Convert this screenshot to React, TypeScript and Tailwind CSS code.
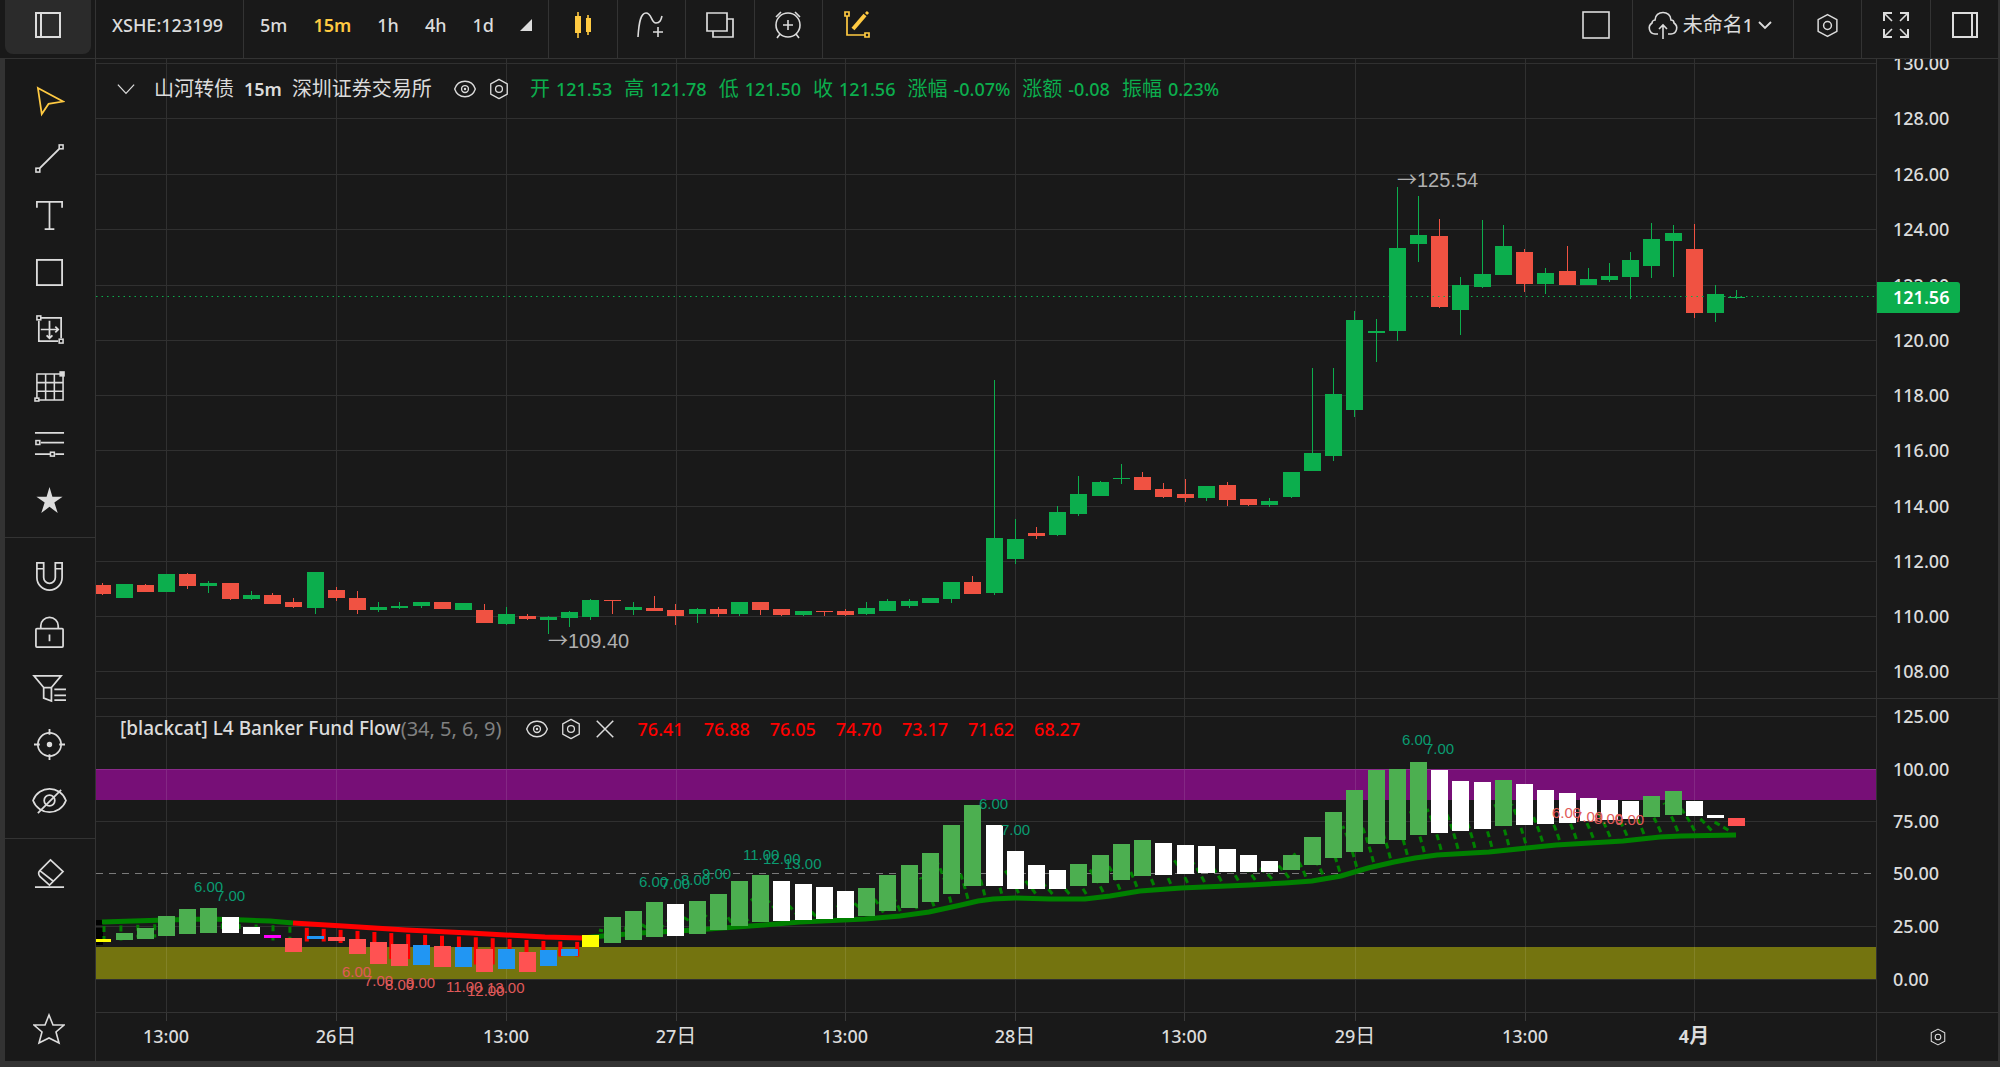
import React from "react";

// [index, body top, body bottom, high, low, direction], index 0 sits on the first 13:00 line
type Candle = [number, number, number, number, number, string];

const candles: Candle[] = [
  [-3, 585, 594, 583, 595, "d"],
  [-2, 584, 598, 584, 598, "u"],
  [-1, 585, 592, 584, 592, "d"],
  [0, 574, 592, 574, 592, "u"],
  [1, 574, 586, 573, 589, "d"],
  [2, 583, 586, 581, 593, "u"],
  [3, 583, 599, 583, 600, "d"],
  [4, 595, 599, 591, 600, "u"],
  [5, 595, 604, 593, 604, "d"],
  [6, 602, 607, 598, 608, "d"],
  [7, 572, 608, 572, 614, "u"],
  [8, 590, 598, 587, 601, "d"],
  [9, 598, 610, 591, 614, "d"],
  [10, 607, 610, 602, 612, "u"],
  [11, 606, 608, 602, 609, "u"],
  [12, 602, 606, 602, 608, "u"],
  [13, 602, 609, 602, 609, "d"],
  [14, 603, 610, 603, 610, "u"],
  [15, 610, 623, 604, 623, "d"],
  [16, 614, 624, 607, 625, "u"],
  [17, 616, 619, 614, 620, "d"],
  [18, 617, 620, 616, 634, "u"],
  [19, 612, 618, 611, 627, "u"],
  [20, 600, 617, 599, 620, "u"],
  [21, 600, 601, 600, 614, "d"],
  [22, 607, 610, 602, 615, "u"],
  [23, 608, 611, 596, 611, "d"],
  [24, 610, 616, 604, 625, "d"],
  [25, 609, 614, 608, 623, "u"],
  [26, 609, 614, 607, 617, "d"],
  [27, 602, 614, 602, 616, "u"],
  [28, 602, 610, 602, 615, "d"],
  [29, 609, 615, 609, 616, "d"],
  [30, 611, 615, 611, 616, "u"],
  [31, 611, 612, 611, 616, "d"],
  [32, 611, 615, 609, 616, "d"],
  [33, 608, 614, 602, 615, "u"],
  [34, 601, 611, 599, 611, "u"],
  [35, 601, 606, 599, 608, "u"],
  [36, 598, 603, 598, 603, "u"],
  [37, 582, 599, 582, 603, "u"],
  [38, 582, 594, 576, 594, "d"],
  [39, 538, 593, 380, 595, "u"],
  [40, 539, 559, 519, 564, "u"],
  [41, 533, 536, 527, 539, "d"],
  [42, 512, 535, 506, 536, "u"],
  [43, 494, 514, 476, 516, "u"],
  [44, 482, 496, 481, 496, "u"],
  [45, 478, 479, 464, 484, "u"],
  [46, 477, 490, 472, 490, "d"],
  [47, 489, 497, 483, 498, "d"],
  [48, 494, 498, 479, 502, "d"],
  [49, 486, 498, 486, 501, "u"],
  [50, 485, 500, 482, 506, "d"],
  [51, 499, 505, 499, 506, "d"],
  [52, 501, 505, 498, 507, "u"],
  [53, 472, 497, 472, 498, "u"],
  [54, 453, 471, 368, 471, "u"],
  [55, 394, 456, 368, 461, "u"],
  [56, 320, 410, 311, 417, "u"],
  [57, 331, 333, 319, 362, "u"],
  [58, 248, 331, 187, 341, "u"],
  [59, 235, 244, 196, 262, "u"],
  [60, 236, 307, 219, 308, "d"],
  [61, 285, 310, 277, 335, "u"],
  [62, 274, 287, 220, 288, "u"],
  [63, 246, 275, 225, 275, "u"],
  [64, 252, 284, 249, 292, "d"],
  [65, 273, 284, 268, 294, "u"],
  [66, 271, 285, 246, 285, "d"],
  [67, 279, 285, 268, 285, "u"],
  [68, 276, 280, 263, 282, "u"],
  [69, 260, 277, 252, 299, "u"],
  [70, 239, 266, 223, 278, "u"],
  [71, 233, 241, 225, 277, "u"],
  [72, 249, 313, 224, 318, "d"],
  [73, 294, 313, 285, 322, "u"],
  [74, 297, 298, 290, 299, "u"],
];

// [top, bottom, colour key], starting at index -3
const flow: [number, number, string][] = [
  [939, 942, "y"], [933, 940, "g"], [928, 939, "g"], [916, 936, "g"], [909, 934, "g"],
  [908, 933, "g"], [917, 933, "w"], [927, 934, "w"], [935, 938, "m"], [938, 952, "r"],
  [936, 939, "b"], [937, 941, "r"], [939, 954, "r"], [942, 964, "r"], [944, 966, "r"],
  [945, 965, "b"], [946, 967, "r"], [947, 967, "b"], [949, 972, "r"], [949, 969, "b"],
  [952, 972, "r"], [950, 966, "b"], [949, 956, "b"], [935, 947, "y"], [917, 943, "g"],
  [911, 940, "g"], [902, 937, "g"], [904, 936, "w"], [901, 934, "g"], [894, 930, "g"],
  [881, 926, "g"], [875, 922, "g"], [881, 921, "w"], [884, 920, "w"], [887, 919, "w"],
  [891, 918, "w"], [888, 916, "g"], [875, 911, "g"], [865, 908, "g"], [853, 902, "g"],
  [825, 894, "g"], [805, 886, "g"], [825, 886, "w"], [851, 889, "w"], [865, 889, "w"],
  [870, 889, "w"], [864, 886, "g"], [855, 883, "g"], [844, 880, "g"], [840, 876, "g"],
  [843, 875, "w"], [845, 874, "w"], [846, 873, "w"], [849, 872, "w"], [855, 872, "w"],
  [861, 872, "w"], [855, 870, "g"], [837, 865, "g"], [812, 858, "g"], [790, 852, "g"],
  [770, 844, "g"], [769, 840, "g"], [762, 835, "g"], [770, 833, "w"], [781, 831, "w"],
  [782, 829, "w"], [780, 826, "g"], [784, 825, "w"], [790, 824, "w"], [793, 823, "w"],
  [798, 821, "w"], [800, 820, "w"], [801, 819, "w"], [796, 817, "g"], [791, 815, "g"],
  [801, 816, "w"], [815, 818, "w"], [818, 826, "r"],
];

const flowColors: Record<string, string> = {
  y: "#ffff00",
  g: "#4caf50",
  w: "#ffffff",
  m: "#ff00ff",
  r: "#ff5252",
  b: "#2196f3",
};

const trend: [number, number][] = [
  [102, 922], [165, 920], [208, 919], [244, 920], [270, 921], [293, 923], [343, 926],
  [406, 930], [470, 933], [545, 937], [582, 938], [603, 936], [640, 933], [695, 930],
  [764, 925], [800, 922], [865, 919], [900, 916], [929, 912], [961, 905], [978, 901],
  [993, 899], [1015, 898], [1050, 899], [1085, 899], [1110, 896], [1140, 891], [1181, 888],
  [1250, 885], [1285, 883], [1312, 881], [1341, 876], [1368, 868], [1394, 862], [1415, 858],
  [1437, 855], [1489, 852], [1556, 845], [1623, 841], [1660, 837], [1681, 836], [1736, 835],
];

const marks: [number, number, string, string][] = [
  [194, 892, "6.00", "up"], [216, 901, "7.00", "up"],
  [342, 977, "6.00", "down"], [364, 986, "7.00", "down"], [385, 990, "8.00", "down"],
  [406, 988, "9.00", "down"], [446, 992, "11.00", "down"], [467, 996, "12.00", "down"],
  [487, 993, "13.00", "down"],
  [639, 887, "6.00", "up"], [661, 889, "7.00", "up"], [681, 885, "8.00", "up"],
  [702, 879, "9.00", "up"], [743, 860, "11.00", "up"], [763, 864, "12.00", "up"],
  [784, 869, "13.00", "up"],
  [979, 809, "6.00", "up"], [1001, 835, "7.00", "up"],
  [1402, 745, "6.00", "up"], [1425, 754, "7.00", "up"],
  [1552, 818, "6.00", "down"], [1574, 822, "7.00", "down"], [1594, 824, "8.00", "down"],
  [1615, 825, "9.00", "down"],
];

const vLines = [166, 336, 506, 676, 845, 1015, 1184, 1355, 1525, 1694];
const priceLines = [63, 118, 174, 229, 285, 340, 395, 450, 506, 561, 616, 671];
const prices = ["130.00", "128.00", "126.00", "124.00", "122.00", "120.00", "118.00", "116.00", "114.00", "112.00", "110.00", "108.00"];
const flowLines = [716, 769, 821, 873, 926, 979];
const flowTicks = ["125.00", "100.00", "75.00", "50.00", "25.00", "0.00"];
const times = ["13:00", "26日", "13:00", "27日", "13:00", "28日", "13:00", "29日", "13:00", "4月"];

const barX = (i: number) => Math.round(166 + i * 21.22);

const trendY = (x: number) => {
  for (let i = 1; i < trend.length; i++) {
    const [x1, y1] = trend[i - 1];
    const [x2, y2] = trend[i];
    if (x <= x2) return y1 + ((y2 - y1) * (x - x1)) / (x2 - x1);
  }
  return 835;
};

const points = (from: number, to: number) =>
  trend
    .filter(([x]) => x >= from && x <= to)
    .map((p) => p.join(","))
    .join(" ");

const Icon = ({ children, className = "size-8" }: { children: React.ReactNode; className?: string }) => (
  <svg viewBox="0 0 32 32" className={className} fill="none" stroke="currentColor" strokeWidth="1.6" aria-hidden="true">
    {children}
  </svg>
);

const HexIcon = ({ className }: { className?: string }) => (
  <Icon className={className}>
    <path d="M16 2 28 8.500V23.500L16 30 4 23.500V8.500Z" strokeLinejoin="round" strokeWidth="1.9" />
    <circle cx="16" cy="16" r="5" strokeWidth="1.9" />
  </Icon>
);

const EyeIcon = ({ className }: { className?: string }) => (
  <Icon className={className}>
    <path d="M1 16C6 1 26 1 31 16C26 31 6 31 1 16Z" strokeWidth="2" />
    <circle cx="16" cy="16" r="5" strokeWidth="2" />
    <circle cx="16" cy="16" r="1" />
  </Icon>
);

const drawTools = [
  {
    label: "Cursor",
    icon: <path d="M4 2 30 16 15 18.5 8 29Z" strokeWidth="1.8" />,
  },
  {
    label: "Trend line",
    icon: (
      <>
        <path d="M6 26 26 6" strokeWidth="2" />
        <rect x="2" y="26" width="4" height="4" />
        <rect x="26" y="2" width="4" height="4" />
      </>
    ),
  },
  { label: "Text", icon: <path d="M3 8V2H29V8M16 2V30M11 30H21" strokeWidth="1.8" /> },
  { label: "Rectangle", icon: <rect x="3" y="3" width="26" height="26" strokeWidth="1.9" /> },
  {
    label: "Measure",
    icon: (
      <>
        <path d="M7 4H28V25M25 28H5V7M16 7V25M7 16H25M13 22l3 3 3-3M22 13l3 3-3 3" strokeWidth="1.8" />
        <rect x="3" y="2" width="4" height="4" />
        <rect x="26" y="26" width="4" height="4" />
      </>
    ),
  },
  {
    label: "Grid",
    icon: (
      <>
        <path d="M3 3H30V30H3ZM3 12H30M3 21H30M12 3V30M21 3V30" />
        <rect x="27" y="1" width="4" height="4" fill="currentColor" />
        <rect x="1" y="28" width="4" height="3" fill="#191919" />
      </>
    ),
  },
  {
    label: "Levels",
    icon: (
      <>
        <path d="M1 5H31M7 15H31M1 27H17M22 27H31" strokeWidth="1.8" />
        <rect x="2" y="13" width="4" height="4" />
        <rect x="17" y="25" width="4" height="4" />
      </>
    ),
  },
  {
    label: "Favourite",
    icon: <path d="M16 2 19 12H29.500L21 18 24.500 29 16 22.500 7.500 29 11 18 2.500 12H13Z" fill="currentColor" stroke="none" />,
  },
];

const lockTools = [
  {
    label: "Magnet",
    icon: <path d="M3 2H10V17A6 6 0 0 0 22 17V2H29V17A13 13 0 0 1 3 17ZM3 8H10M22 8H29" strokeWidth="1.8" />,
  },
  {
    label: "Lock",
    icon: (
      <>
        <rect x="2" y="12" width="28" height="19" rx="1" strokeWidth="1.8" />
        <path d="M7 12V9A9 8.500 0 0 1 25 9V12M16 18V25" strokeWidth="1.8" />
      </>
    ),
  },
  {
    label: "Filter",
    icon: <path d="M0 3H28L18 15V29L10 26V15ZM10 15H18M21 17H33M21 23H33M21 28H33" strokeWidth="1.8" />,
  },
  {
    label: "Target",
    icon: (
      <>
        <circle cx="16" cy="16" r="12" strokeWidth="1.8" />
        <path d="M16 0V6M16 26V32M0 16H6M26 16H32" strokeWidth="1.9" />
        <circle cx="16" cy="16" r="2" fill="currentColor" />
      </>
    ),
  },
  {
    label: "Hide",
    icon: (
      <>
        <path d="M-1 16C5 0 27 0 33 16C27 32 5 32 -1 16Z" strokeWidth="1.8" />
        <circle cx="16" cy="16" r="5.500" strokeWidth="1.8" />
        <path d="M4 29 28 5" strokeWidth="1.9" />
      </>
    ),
  },
];

const ohlc = [
  ["开", "121.53"],
  ["高", "121.78"],
  ["低", "121.50"],
  ["收", "121.56"],
  ["涨幅", "-0.07%"],
  ["涨额", "-0.08"],
  ["振幅", "0.23%"],
];

const Header = () => (
  <header className="flex h-[59px] shrink-0 border-b border-[#333] pl-[5px] text-lg font-medium">
    <div className="w-[91px] shrink-0 border-r border-[#333] pb-1 pr-1">
      <button aria-label="Toggle left panel" className="flex h-full w-full items-center justify-center rounded-b-lg bg-[#2b2b2b] pb-1">
        <Icon>
          <path d="M4 4H28V28H4ZM9 4V28" strokeWidth="2" />
        </Icon>
      </button>
    </div>
    <button className="border-r border-[#333] pb-2 pl-4 pr-5">XSHE:123199</button>
    <nav className="flex items-center gap-6.5 border-r border-[#333] px-4 pb-2">
      <button>5m</button>
      <button className="font-semibold text-[#ffca42]">15m</button>
      <button>1h</button>
      <button>4h</button>
      <button>1d</button>
      <button aria-label="More intervals">
        <svg viewBox="0 0 12 12" className="size-3 fill-current">
          <path d="M12 0V12H0Z" />
        </svg>
      </button>
    </nav>
    <button aria-label="Chart type" className="w-[69px] border-r border-[#333] pb-2 text-[#ffca42]">
      <Icon className="mx-auto size-8">
        <path d="M11 3V29M21 6V26" />
        <path d="M8 7H14V24H8ZM19 9H24V23H19Z" fill="currentColor" stroke="none" />
      </Icon>
    </button>
    <button aria-label="Indicators" className="w-[68px] border-r border-[#333] pb-2">
      <Icon className="mx-auto size-8">
        <path d="M3 28C4 12 6 4 11 4C17 4 16 14 21 14C25 14 26 11 27 7M23 18V28M18 23H28" />
      </Icon>
    </button>
    <button aria-label="Layers" className="w-[69px] border-r border-[#333] pb-2">
      <Icon className="mx-auto size-8">
        <path d="M3 4H23V22H3ZM23 10H29V28H9V22" strokeWidth="1.7" />
      </Icon>
    </button>
    <button aria-label="Alerts" className="w-[68px] border-r border-[#333] pb-2">
      <Icon className="mx-auto size-8">
        <circle cx="16" cy="16" r="12" />
        <path d="M16 11V21M11 16H21M4 8 9 3M28 8 23 3M8 25 5 29M24 25 27 29" />
      </Icon>
    </button>
    <button aria-label="Drawing" className="w-[68px] pb-2 text-[#ffca42]">
      <Icon className="mx-auto size-8">
        <path d="M6 7V26H24M4 3H8V7H4ZM24 24H28V28H24Z" strokeWidth="1.7" />
        <path d="M12 20 24 6" strokeWidth="4" />
        <path d="M25 5 27 3" strokeWidth="3" />
      </Icon>
    </button>
    <div className="ml-auto flex">
      <button aria-label="Layout" className="px-5 pb-2 pt-1">
        <Icon className="size-8">
          <rect x="3" y="1" width="26" height="26" />
        </Icon>
      </button>
      <button className="flex items-center gap-1 border-x border-[#333] pb-2 pl-3.5 pr-5 text-xl font-normal">
        <Icon className="size-8">
          <path d="M11 25H8A6 6 0 0 1 5 14C5 12 7 11 8 11C8 1 24 1 24 11C26 11 27 12 27 14A6 6 0 0 1 24 25H21M16 30V16M12 20 16 16 20 20" />
        </Icon>
        <span>
          未命名<span className="text-lg font-medium">1</span>
        </span>
        <svg viewBox="0 0 16 16" className="size-4" fill="none" stroke="currentColor" strokeWidth="1.8">
          <path d="M2 5 8 11 14 5" />
        </svg>
      </button>
      <button aria-label="Settings" className="w-[68px] border-r border-[#333] pb-2">
        <HexIcon className="mx-auto size-[25px]" />
      </button>
      <button aria-label="Fullscreen" className="w-[69px] border-r border-[#333] pb-2">
        <Icon className="mx-auto size-8">
          <path d="M4 12V4H12M20 4H28V12M28 20V28H20M12 28H4V20" strokeWidth="2" />
          <path d="M4 4 12 12M28 4 20 12M28 28 20 20M4 28 12 20" />
        </Icon>
      </button>
      <button aria-label="Toggle right panel" className="w-[69px] border-r-2 border-[#333] pb-2">
        <Icon className="mx-auto size-8">
          <path d="M4 4H28V28H4ZM23 4V28" strokeWidth="2" />
        </Icon>
      </button>
    </div>
  </header>
);

const Sidebar = () => (
  <aside className="flex w-[91px] shrink-0 flex-col border-r border-[#333]">
    <div className="flex flex-col border-b border-[#333] pb-2 pr-0.5 pt-3.5">
      {drawTools.map((t, i) => (
        <button
          key={t.label}
          aria-label={t.label}
          className={i === 0 ? "flex h-[57px] items-center justify-center text-[#ffca42]" : "flex h-[57px] items-center justify-center"}
        >
          <Icon className="size-[31px]">{t.icon}</Icon>
        </button>
      ))}
    </div>
    <div className="flex flex-col border-b border-[#333] pb-2.5 pr-0.5 pt-2.5">
      {lockTools.map((t) => (
        <button key={t.label} aria-label={t.label} className="flex h-14 items-center justify-center">
          <Icon className="size-[31px] overflow-visible">{t.icon}</Icon>
        </button>
      ))}
    </div>
    <button aria-label="Erase" className="mt-1.5 flex h-14 items-center justify-center pr-0.5">
      <Icon className="size-[31px]">
        <path d="M17 2 30 14 16 28 6 19C4 16 5 14 6 13ZM6 13 20 24M1 30H31" strokeWidth="1.7" />
      </Icon>
    </button>
    <button aria-label="Starred" className="mb-1 mt-auto flex h-14 items-center justify-center pr-0.5">
      <Icon className="size-8">
        <path d="M16 2 20 12H31L23 19 26 30 16 25 6 30 9 19 1 12H12Z" />
      </Icon>
    </button>
  </aside>
);

const Grid = ({ rows, top, bottom }: { rows: number[]; top: number; bottom: number }) => (
  <g stroke="#303030" shapeRendering="crispEdges">
    {rows.map((y) => (
      <line key={y} x1="96" x2="1876" y1={y + 0.5} y2={y + 0.5} />
    ))}
    {vLines.map((x) => (
      <line key={x} x1={x + 0.5} x2={x + 0.5} y1={top} y2={bottom} />
    ))}
  </g>
);

const Extreme = ({ x, y, value }: { x: number; y: number; value: string }) => (
  <text x={x} y={y} className="fill-[#b0b0b0] font-['Liberation_Sans',sans-serif] text-xl">
    <tspan className="font-['Noto_Sans_CJK_SC',sans-serif]">→</tspan>
    {value}
  </text>
);

const PriceChart = () => (
  <svg viewBox="96 59 1780 639" preserveAspectRatio="none" className="absolute inset-0 h-full w-full" role="img" aria-label="Price chart">
    <Grid rows={priceLines} top={59} bottom={698} />
    <g shapeRendering="crispEdges">
      {candles.map(([i, top, bottom, high, low, dir]) => (
        <g key={i} fill={dir === "u" ? "#0cae4d" : "#f05242"}>
          <rect x={barX(i)} y={high} width="1" height={low - high} />
          <rect x={barX(i) - 8} y={top} width="17" height={bottom - top} />
        </g>
      ))}
    </g>
    <line x1="96" x2="1876" y1="296.5" y2="296.5" stroke="#0cae4d" strokeDasharray="1.5 4" />
    <Extreme x={1397} y={187} value="125.54" />
    <Extreme x={548} y={648} value="109.40" />
  </svg>
);

// dashed ribs that fan out between the bars and the trend line
const ribs = Array.from({ length: 97 }, (_, n) => {
  const x = 104 + n * 16.9;
  const y = trendY(x);
  const bar = flow[Math.min(flow.length - 1, Math.max(0, Math.round((x - 166) / 21.22) + 3))];
  const mid = (bar[0] + bar[1]) / 2;
  const h = Math.min(46, y - mid);
  const red = x > 293 && x < 586;
  const d =
    mid > y
      ? `M${x} ${y + 4}L${x} ${mid + 4}`
      : `M${x + 2} ${y - 5}Q${x - 5} ${y - h * 0.7} ${x - 12} ${y - h}`;
  return { d, red };
});

const FlowChart = () => (
  <svg viewBox="96 699 1780 313" preserveAspectRatio="none" className="absolute inset-0 h-full w-full" role="img" aria-label="Banker fund flow">
    <Grid rows={flowLines.filter((y) => y !== 873 && y !== 769)} top={699} bottom={1012} />
    <rect x="96" y="769" width="1780" height="31" fill="#770f77" />
    <rect x="96" y="947" width="1780" height="32" fill="#74740f" />
    <g fillOpacity="0.1" fill="#ffffff">
      {vLines.map((x) => (
        <g key={x}>
          <rect x={x} y="769" width="1" height="31" />
          <rect x={x} y="947" width="1" height="32" />
        </g>
      ))}
    </g>
    <line x1="96" x2="1876" y1="769.5" y2="769.5" stroke="#8a2a8a" />
    <line x1="96" x2="1876" y1="873.5" y2="873.5" stroke="#7a7a7a" strokeDasharray="7 6" />
    <path d="M96 920h7v5h-7zM96 928h7v17h-7z" fill="#000000" />
    <g fill="none">
      {ribs.map((r, i) => (
        <path key={i} d={r.d} stroke={r.red ? "#ff0000" : "#008000"} strokeWidth={r.red ? 4 : 3} strokeDasharray={r.red ? undefined : "6 4"} />
      ))}
      <polyline points={points(0, 295)} stroke="#008000" strokeWidth="5" />
      <polyline points={points(290, 590)} stroke="#ff0000" strokeWidth="5" />
      <polyline points={points(580, 2000)} stroke="#008000" strokeWidth="5" />
    </g>
    <g shapeRendering="crispEdges">
      {flow.map(([top, bottom, c], i) => (
        <rect key={i} x={barX(i - 3) - 8} y={top} width="17" height={bottom - top} fill={flowColors[c]} />
      ))}
    </g>
    <g className="font-['Liberation_Sans',sans-serif] text-[15px]">
      {marks.map(([x, y, label, kind]) => (
        <text key={x} x={x} y={y} fill={kind === "up" ? "#0a9b71" : "#e05a5a"}>
          {label}
        </text>
      ))}
    </g>
  </svg>
);

const App = () => {
  return (
    <div className="flex min-h-screen flex-col border-b-[6px] border-[#333] bg-[#191919] font-['Noto_Sans','Noto_Sans_CJK_SC',sans-serif] text-[#dcdcdc]">
      <Header />
      <div className="flex grow border-l-[5px] border-[#333]">
        <Sidebar />
        <main className="grid min-w-0 grow grid-cols-[minmax(0,1fr)_122px] grid-rows-[640fr_314fr_48px] border-r-2 border-[#333]">
          <section className="relative border-b border-[#333]">
            <PriceChart />
            <div className="relative flex h-15 items-center whitespace-nowrap pl-5 text-xl font-normal">
              <button aria-label="Collapse" className="mr-4.5">
                <Icon className="size-5">
                  <path d="M3 9 16 23 29 9" strokeWidth="2" />
                </Icon>
              </button>
              <span>山河转债</span>
              <span className="mx-2.5 text-lg font-semibold">15m</span>
              <span>深圳证券交易所</span>
              <button aria-label="Toggle symbol" className="ml-5.5">
                <EyeIcon className="size-[22px]" />
              </button>
              <button aria-label="Symbol settings" className="ml-3">
                <HexIcon className="size-[22px]" />
              </button>
              <dl className="ml-5 flex gap-3 text-[#0cae4d]">
                {ohlc.map(([name, value]) => (
                  <div key={name} className="flex items-center gap-1.5">
                    <dt>{name}</dt>
                    <dd className="text-lg font-medium">{value}</dd>
                  </div>
                ))}
              </dl>
            </div>
          </section>
          <section className="relative overflow-hidden border-b border-l border-[#333]">
            <svg viewBox="1877 59 121 639" preserveAspectRatio="none" className="absolute inset-0 h-full w-full">
              <g className="fill-[#dcdcdc] text-lg font-medium">
                {prices.map((p, i) => (
                  <text key={p} x="1893" y={priceLines[i] + 7}>
                    {p}
                  </text>
                ))}
              </g>
              <path d="M1877 282H1957a3 3 0 0 1 3 3V310a3 3 0 0 1 -3 3H1877Z" fill="#0cae4d" />
              <text x="1893" y="304" className="fill-white text-lg font-semibold">
                121.56
              </text>
            </svg>
          </section>
          <section className="relative border-b border-[#333]">
            <FlowChart />
            <div className="relative flex h-15 items-center whitespace-nowrap pl-6 text-lg font-medium">
              <span className="text-[19px]">[blackcat] L4 Banker Fund Flow</span>
              <span className="text-xl font-normal text-[#808080]">(34, 5, 6, 9)</span>
              <button aria-label="Toggle indicator" className="ml-6">
                <EyeIcon className="size-[22px]" />
              </button>
              <button aria-label="Indicator settings" className="ml-3">
                <HexIcon className="size-[22px]" />
              </button>
              <button aria-label="Remove indicator" className="ml-3">
                <Icon className="size-[22px]">
                  <path d="M4 4 28 28M28 4 4 28" strokeWidth="2.2" />
                </Icon>
              </button>
              <div className="ml-5.5 flex gap-5 text-[#ff0000]">
                {["76.41", "76.88", "76.05", "74.70", "73.17", "71.62", "68.27"].map((v) => (
                  <span key={v}>{v}</span>
                ))}
              </div>
            </div>
          </section>
          <section className="relative border-b border-l border-[#333]">
            <svg viewBox="1877 699 121 313" preserveAspectRatio="none" className="absolute inset-0 h-full w-full">
              <g className="fill-[#dcdcdc] text-lg font-medium">
                {flowTicks.map((p, i) => (
                  <text key={p} x="1893" y={flowLines[i] + 7}>
                    {p}
                  </text>
                ))}
              </g>
            </svg>
          </section>
          <section className="relative">
            <svg viewBox="96 1013 1780 48" preserveAspectRatio="none" className="absolute inset-0 h-full w-full">
              {vLines.map((x, i) => (
                <g key={x}>
                  <rect x={x} y="1013" width="1" height="8" fill="#3a3a3a" />
                  <text x={x} y="1043" textAnchor="middle" className={i === 9 ? "fill-[#dcdcdc] text-lg font-bold" : "fill-[#dcdcdc] text-lg font-medium"}>
                    {times[i].replace(/[日月]/, "")}
                    <tspan className={i === 9 ? "text-xl font-bold" : "text-xl font-normal"}>{times[i].match(/[日月]/)?.[0]}</tspan>
                  </text>
                </g>
              ))}
            </svg>
          </section>
          <div className="flex items-center justify-center border-l border-[#333]">
            <button aria-label="Axis settings">
              <HexIcon className="size-[18px]" />
            </button>
          </div>
        </main>
      </div>
    </div>
  );
};

export default App;
